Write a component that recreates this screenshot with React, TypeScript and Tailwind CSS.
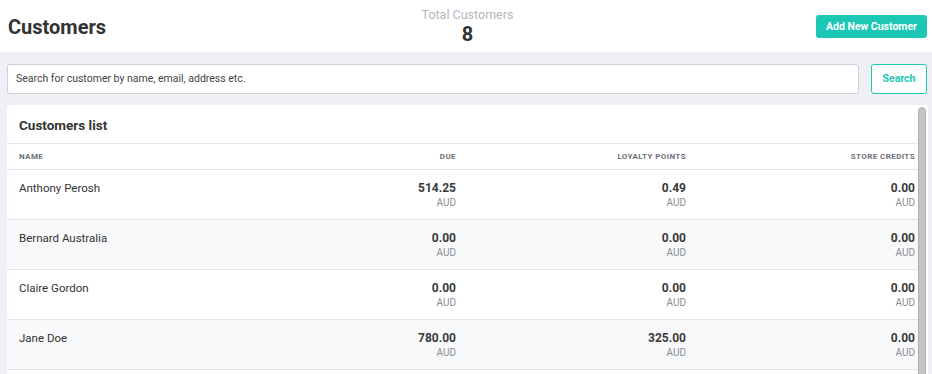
import React from "react";

const rows = [
  { name: "Anthony Perosh", due: "514.25", loyalty: "0.49", credits: "0.00" },
  { name: "Bernard Australia", due: "0.00", loyalty: "0.00", credits: "0.00" },
  { name: "Claire Gordon", due: "0.00", loyalty: "0.00", credits: "0.00" },
  { name: "Jane Doe", due: "780.00", loyalty: "325.00", credits: "0.00" },
];

function Amount({ v }: { v: string }) {
  return (
    <div className="flex flex-col items-end">
      <span className="text-[12px] font-bold leading-[15px] text-[#3a3a3a]">{v}</span>
      <span className="text-[10px] leading-[13px] text-[#8a8d93]">AUD</span>
    </div>
  );
}

export default function App() {
  return (
    <div
      className="w-[932px] h-[374px] overflow-hidden bg-[#eef0f5] flex flex-col"
      style={{ fontFamily: "Roboto, 'Noto Sans', sans-serif" }}
    >
      <div className="h-[52px] shrink-0 bg-white flex items-center pl-[8px] pr-[5px]">
        <div className="flex-1 text-[20px] font-bold text-[#333] pt-[2px]">Customers</div>
        <div className="flex-1 flex flex-col items-center pt-[2px]">
          <span className="text-[12.5px] leading-[14px] text-[#b4b7bc]">Total Customers</span>
          <span className="text-[20px] font-bold leading-[24px] text-[#333]">8</span>
        </div>
        <div className="flex-1 flex justify-end">
          <button className="h-[23px] w-[111px] rounded-[3px] bg-[#1cc8b5] text-white text-[10.5px] font-bold mt-[1px]">
            Add New Customer
          </button>
        </div>
      </div>
      <div className="flex shrink-0 gap-[12px] pl-[7px] pr-[5px] pt-[12px] pb-[11px]">
        <div className="flex-1 h-[30px] bg-white border border-[#cdd0d6] rounded-[3px] flex items-center px-[8px] text-[10.5px] text-[#444]">
          Search for customer by name, email, address etc.
        </div>
        <button className="w-[56px] h-[30px] bg-white border border-[#1cc8b5] rounded-[3px] text-[10.5px] font-bold text-[#1cc8b5]">
          Search
        </button>
      </div>
      <div className="flex-1 ml-[7px] mr-[4px] bg-white rounded-t-[4px] flex">
        <div className="flex-1">
          <div className="h-[39px] flex items-center pl-[12px] pr-[3px] border-b border-[#e6e8ec] text-[13.5px] font-bold text-[#333] pt-[2px]">
            Customers list
          </div>
          <div className="h-[26px] grid grid-cols-[1fr_90px_230px_229px] items-center pl-[12px] pr-[3px] border-b border-[#e0e2e7] text-[8px] font-bold text-[#6b7079] tracking-[0.4px]">
            <span>NAME</span>
            <span className="text-right">DUE</span>
            <span className="text-right">LOYALTY POINTS</span>
            <span className="text-right">STORE CREDITS</span>
          </div>
          {rows.map((r, i) => (
            <div
              key={r.name}
              className={`h-[50px] grid grid-cols-[1fr_90px_230px_229px] items-start pt-[11px] pl-[12px] pr-[3px] border-b border-[#e3e5ea] ${
                i % 2 === 1 ? "bg-[#f8f9fb]" : "bg-white"
              }`}
            >
              <span className="text-[11.5px] text-[#333] leading-[15px]">{r.name}</span>
              <Amount v={r.due} />
              <Amount v={r.loyalty} />
              <Amount v={r.credits} />
            </div>
          ))}
        </div>
        <div className="w-[10px] pt-[2px] bg-white rounded-tr-[4px]">
          <div className="w-[8px] h-[400px] rounded-t-[4px] bg-[#c4c4c4] border border-[#b0b0b0]" />
        </div>
      </div>
    </div>
  );
}
